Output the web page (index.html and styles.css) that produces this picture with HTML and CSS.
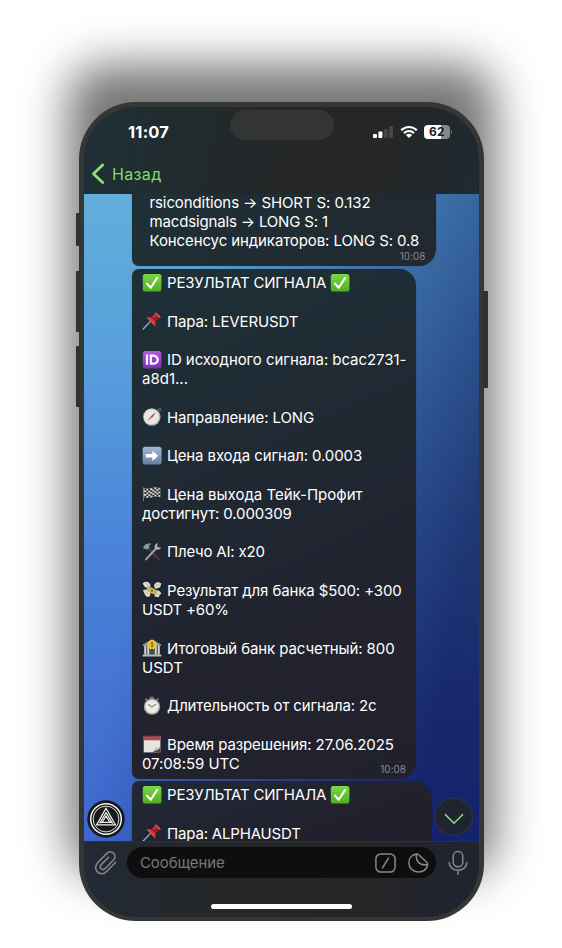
FILE: index.html
```html
<!DOCTYPE html>
<html lang="ru">
<head>
<meta charset="utf-8">
<title>Чат</title>
<link rel="stylesheet" href="styles.css">
</head>
<body>
<svg class="defs" width="0" height="0">
  <defs>
    <linearGradient id="gGreen" x1="0" y1="0" x2="0" y2="1"><stop offset="0" stop-color="#7bd84a"/><stop offset="1" stop-color="#4fae20"/></linearGradient>
    <linearGradient id="gPurple" x1="0" y1="0" x2="0" y2="1"><stop offset="0" stop-color="#b45be0"/><stop offset="1" stop-color="#7d2fb8"/></linearGradient>
    <linearGradient id="gBlue" x1="0" y1="0" x2="0" y2="1"><stop offset="0" stop-color="#a3b7d3"/><stop offset="1" stop-color="#647fa6"/></linearGradient>
    <symbol id="check" viewBox="0 0 20 20"><rect x=".8" y="1" width="18.6" height="17.6" rx="2.6" fill="url(#gGreen)"/><path d="M5 10.6 8.7 14.8 15.2 4.8" fill="none" stroke="#fff" stroke-width="2.1" stroke-linecap="round" stroke-linejoin="round"/></symbol>
    <symbol id="pin" viewBox="0 0 20 20"><path d="M1.2 18 8.2 10.6" stroke="#9fb4c4" stroke-width="1.3" stroke-linecap="round"/><path d="M4.4 6.6C6 5.6 8 5.9 9.3 6.4L12.6 3.6C12.4 2.5 12.7 1.5 13.5.9L19.2 6.2C18.4 7.1 17.4 7.3 16.4 7.1L13.4 10.5C14 12 14 13.8 13 15.4Z" fill="#cf3137"/><path d="M9.3 6.4 12.6 3.6 16.4 7.1 13.4 10.5Z" fill="#9e2029"/><path d="M11 5.9 13.3 4.1M14.3 2.2 17.9 5.6M6 7.2 12.2 13" stroke="#f07070" stroke-width=".9"/></symbol>
    <symbol id="idmark" viewBox="0 0 20 20"><rect x=".8" y="1" width="18.6" height="17.4" rx="3" fill="url(#gPurple)"/><path d="M5 4.6V14.8M8.8 5.7V13.7H11C17.2 13.7 17.2 5.7 11 5.7Z" fill="none" stroke="#fff" stroke-width="2.2"/></symbol>
    <symbol id="compass" viewBox="0 0 20 20"><circle cx="17.6" cy="2.6" r="1.3" fill="none" stroke="#7f858a" stroke-width=".8"/><circle cx="9.8" cy="10" r="8.7" fill="#b0b3b3"/><circle cx="9.4" cy="9.8" r="7.6" fill="#ebe9e4"/><circle cx="9.4" cy="9.8" r="5.7" fill="none" stroke="#cfd0cd" stroke-width=".7" stroke-dasharray="1 1"/><path d="M14 5 10.2 10.7 8.7 9.2Z" fill="#e02b28"/><path d="M4.8 14.6 8.7 9.2 10.2 10.7Z" fill="#8c8f91"/></symbol>
    <symbol id="arrow" viewBox="0 0 20 20"><rect x=".6" y=".8" width="19" height="17.8" rx="2.8" fill="url(#gBlue)"/><path d="M3.8 8.1H10.4V4.7L16.2 9.8 10.4 14.9V11.5H3.8Z" fill="#fff"/></symbol>
    <symbol id="flag" viewBox="0 0 20 20"><path d="M1.5 3.4V17" stroke="#7d8082" stroke-width="1"/><path d="M2 4Q6 5.5 10 4T18.3 4V13Q14 11.8 10 13.2T2 13Z" fill="#d9d9d7"/><path d="M3.4 4.5V13.4M7.4 4.8V13.7M11.4 3.8V12.8M15.4 3.3V12.6" stroke="#26282b" stroke-width="2" stroke-dasharray="1.9 1.7"/><path d="M5.4 4.8V13.6M9.4 4.4V13.4M13.4 3.5V12.8M17.4 3.8V12.8" stroke="#26282b" stroke-width="2" stroke-dasharray="1.9 1.7" stroke-dashoffset="1.8"/></symbol>
    <symbol id="tools" viewBox="0 0 20 20"><path d="M5.2 5.3 17 17.6" stroke="#4c3634" stroke-width="2.3" stroke-linecap="round"/><path d="M1.2 5.2C3 1.6 6.1 1.2 9.5 1.7L6.9 3.5 7.6 5.4 4.7 8 3.5 6.5 1.9 7Z" fill="#859aa5"/><path d="M4 17.4 14 6.5" stroke="#99a4ab" stroke-width="2" stroke-linecap="round"/><path d="M15.9 1.2C12.8 1.8 12.1 4.1 13 6.1 14.1 8.4 17.8 8.6 19 5.3L16.4 5.5 15 4.2Z" fill="#aab5bb"/></symbol>
    <symbol id="money" viewBox="0 0 20 20"><path d="M.8 3.3C4 .5 8 1.8 8.7 6.3L5.4 8C3.5 7.6 2.2 6.6 2 5.6 1.3 5 .8 4.2.8 3.3ZM12 6C12.3 2.2 16 1 19.3 3.4L18.4 6.4C17.5 7.8 15 8.6 13 8.5ZM1 10.6C3 8.9 6 9.2 8.5 12L8 16.2 4.8 17 2.9 14.5ZM12.4 11.4C15.2 9.6 18.2 10.8 19.4 13.4L17.3 15.2 17 17.3 12.7 16.4Z" fill="#e0ddca"/><path d="M3.2 3.5 7.7 6M13 6.1 17.4 4M2.5 11.4 7 14.2M14 12.5 17.4 15" stroke="#a8a58e" stroke-width=".7"/><path d="M5.4 6.2 15.4 10.4 14.4 15.1 4.3 10.8Z" fill="#b5b68d"/><path d="M8.4 7.1 12.6 8.9 11.3 14.2 7.4 12.5Z" fill="#e1b137"/><circle cx="10" cy="10.7" r="1.3" fill="#81733d"/></symbol>
    <symbol id="bank" viewBox="0 0 20 20"><path d="M.9 6.6 10 1.2 19.1 6.6V8H.9Z" fill="#8a9da1"/><path d="M2 8H18V16.7H2Z" fill="#586a70"/><path d="M3.2 8V16.7M6.2 8V16.7M13.8 8V16.7M16.8 8V16.7" stroke="#d4d7cd" stroke-width="1.6"/><path d="M8.4 11H11.6V17H8.4Z" fill="#344955"/><path d="M.6 16.5H19.4V18.5H.6Z" fill="#b4bcb7"/><circle cx="10" cy="6.7" r="4.6" fill="#f0c532"/><path d="M11.5 5Q8.5 3.9 8.7 5.6C9 7 11.7 6.2 11.5 7.9 11.1 9 9.3 8.6 8.5 8.2M10.1 3.6V9.5" fill="none" stroke="#8b681b" stroke-width=".9"/></symbol>
    <symbol id="watch" viewBox="0 0 20 20"><path d="M8.2.7H11.8V3H8.2Z" fill="#75777a"/><path d="m3.4 4 1.6-1.6M16.4 4l-1.6-1.6" stroke="#8b8d8e" stroke-width="1.4"/><circle cx="10" cy="10.6" r="8.2" fill="#a5a7a8"/><circle cx="10" cy="10.6" r="6.7" fill="#edebe7"/><path d="M6 8.4 9.9 10.7 14.2 8.3" fill="none" stroke="#555" stroke-width=".9"/><circle cx="10" cy="10.7" r=".9" fill="#d58230"/></symbol>
    <symbol id="calendar" viewBox="0 0 20 20"><path d="M1.7 2H18.4V18.4H1.7Z" fill="#e6e5e3"/><path d="M1.7 2H18.4V6.3H1.7Z" fill="#a84c50"/><path d="M2 1.9H18" stroke="#56383c" stroke-width="2" stroke-dasharray=".8 1"/><path d="M9.8 18.4C12 17.8 13.6 16.2 13.8 14.2 16 14.6 17.6 14 18.4 12.4V18.4Z" fill="#4c5052"/><path d="M10.5 17.8C12.2 16.8 13 15.6 13.1 13.2 15 14 17 13.6 18.4 12.1L17.2 15.1Z" fill="#c9c9c7"/></symbol>
  </defs>
</svg>

<main class="phone">
  <i class="key key-a"></i><i class="key key-b"></i><i class="key key-c"></i><i class="key key-d"></i>
  <div class="screen">
    <header class="top">
      <div class="status">
        <span class="time">11:07</span>
        <span class="island"></span>
        <span class="signals">
          <svg width="20" height="14" viewBox="0 0 20 14"><rect x="0" y="9" width="4" height="4" rx="1" fill="#fff"/><rect x="5.4" y="6.5" width="4" height="6.5" rx="1" fill="#fff"/><rect x="10.7" y="4" width="4" height="9" rx="1" fill="#454748"/><rect x="16" y="1" width="4" height="12" rx="1" fill="#454748"/></svg>
          <svg class="wifi" width="18" height="14" viewBox="0 0 18 14"><path d="M1.2 5.2C5.6.9 12.4.9 16.8 5.2M4 8.1C6.9 5.4 11.1 5.4 14 8.1" fill="none" stroke="#fff" stroke-width="2.2"/><path d="M5.9 9.9C7.7 8.3 10.3 8.3 12.1 9.9L9 13.1Z" fill="#fff"/></svg>
          <span class="battery">62</span><span class="nub"></span>
        </span>
      </div>
      <div class="nav">
        <svg width="14" height="22" viewBox="0 0 14 22"><path d="M11.7 2 2.4 10.8 11.7 19.6" fill="none" stroke="#8ce572" stroke-width="2.7" stroke-linecap="round" stroke-linejoin="round"/></svg>
        <span class="back">Назад</span>
      </div>
    </header>

    <section class="chat">
      <article class="bubble first">
        <p><span class="t1">rsiconditions → SHORT S: 0.132</span></p>
        <p><span class="t2">macdsignals → LONG S: 1</span></p>
        <p><span class="t3">Консенсус индикаторов: LONG S: 0.8</span></p>
        <time>10:08</time>
      </article>
      <article class="bubble second">
        <p><svg><use href="#check"/></svg><span class="t4">РЕЗУЛЬТАТ СИГНАЛА</span><svg class="end"><use href="#check"/></svg></p>
        <p></p>
        <p><svg><use href="#pin"/></svg><span class="t5">Пара: LEVERUSDT</span></p>
        <p></p>
        <p><svg><use href="#idmark"/></svg><span class="t6">ID исходного сигнала: bcac2731-</span></p>
        <p><span class="t7">a8d1...</span></p>
        <p></p>
        <p><svg><use href="#compass"/></svg><span class="t8">Направление: LONG</span></p>
        <p></p>
        <p><svg><use href="#arrow"/></svg><span class="t9">Цена входа сигнал: 0.0003</span></p>
        <p></p>
        <p><svg><use href="#flag"/></svg><span class="t10">Цена выхода Тейк-Профит</span></p>
        <p><span class="t11">достигнут: 0.000309</span></p>
        <p></p>
        <p><svg><use href="#tools"/></svg><span class="t12">Плечо AI: x20</span></p>
        <p></p>
        <p><svg><use href="#money"/></svg><span class="t13">Результат для банка $500: +300</span></p>
        <p><span class="t14">USDT +60%</span></p>
        <p></p>
        <p><svg><use href="#bank"/></svg><span class="t15">Итоговый банк расчетный: 800</span></p>
        <p><span class="t16">USDT</span></p>
        <p></p>
        <p><svg><use href="#watch"/></svg><span class="t17">Длительность от сигнала: 2с</span></p>
        <p></p>
        <p><svg><use href="#calendar"/></svg><span class="t18">Время разрешения: 27.06.2025</span></p>
        <p><span class="t19">07:08:59 UTC</span></p>
        <time>10:08</time>
      </article>
      <article class="bubble third">
        <p><svg><use href="#check"/></svg><span class="t4">РЕЗУЛЬТАТ СИГНАЛА</span><svg class="end"><use href="#check"/></svg></p>
        <p></p>
        <p><svg><use href="#pin"/></svg><span class="t20">Пара: ALPHAUSDT</span></p>
      </article>
      <svg class="avatar" width="38" height="38" viewBox="0 0 38 38"><circle cx="19" cy="19" r="18.7" fill="#161819"/><g fill="none" stroke="#f3f3f3"><circle cx="19" cy="19" r="15.3" stroke-width="1.5"/><circle cx="19" cy="19" r="12.9" stroke-width=".9"/><path d="M19 8.3 28.3 24.8H9.7Z" stroke-width="1.3"/><path d="M19 12.6 25.6 23.6M19 12.6 12.6 23.4M19 16 22.8 22.2H15.2ZM13 22.4H25" stroke-width="1.1"/></g></svg>
      <span class="down"><svg width="20" height="12" viewBox="0 0 20 12"><path d="M1 1.3 10 10.2 19 1.3" fill="none" stroke="#8ce572" stroke-width="1.5"/></svg></span>
    </section>

    <footer class="composer">
      <div class="row">
        <svg class="clip" width="24" height="26" viewBox="0 0 24 26"><path d="M21.5 12.4 13.2 21.1C10.3 24.4 6 24.5 3.4 21.9.9 19.4 1.1 15.3 3.8 12.5L12.6 3.6C14.7 1.4 17.8 1.3 19.7 3.2 21.6 5.1 21.4 8 19.3 10.2L11.2 18.4C9.9 19.8 8.1 19.8 7 18.7 5.9 17.5 6 15.9 7.2 14.6L14.5 7.2" fill="none" stroke="#85888b" stroke-width="1.5" stroke-linecap="round"/></svg>
        <div class="field">
          <span class="placeholder">Сообщение</span>
          <svg width="21" height="20" viewBox="0 0 21 20"><rect x=".9" y=".9" width="19.2" height="18.2" rx="5" fill="none" stroke="#898989" stroke-width="1.5"/><path d="M13.5 5.2 7.5 14.8" stroke="#898989" stroke-width="1.5" stroke-linecap="round"/></svg>
          <svg width="21" height="20" viewBox="0 0 21 20"><path d="M8.2 1C3.8 1.7.9 5.3.9 9.7c0 5.2 4 9.3 9.3 9.3 4.7 0 8.3-2.6 9.4-7Q20 10.5 18.5 9L10.6 1.8Q9.5.7 8.2 1ZM8.4 1.2C7.4 7.5 11 12.8 19.3 11.7" fill="none" stroke="#898989" stroke-width="1.5" stroke-linejoin="round"/></svg>
        </div>
        <svg class="mic" width="20" height="26" viewBox="0 0 20 26"><rect x="5.2" y="1.6" width="9.6" height="15.2" rx="4.6" fill="none" stroke="#85878c" stroke-width="1.5"/><path d="M1.1 12.4C1.4 17.2 5.1 20.3 10 20.3S18.6 17.2 18.9 12.4M10 20.3V24.2" fill="none" stroke="#85878c" stroke-width="1.5" stroke-linecap="round"/></svg>
      </div>
      <div class="home"></div>
    </footer>
  </div>
</main>
</body>
</html>
```
FILE: styles.css
```css
* { box-sizing: border-box; }
body { margin: 0; height: 948px; overflow: hidden; background: #fff; font-family: Inter, "Liberation Sans", sans-serif; display: flex; align-items: flex-start; }
.defs { position: absolute; }
p { margin: 0; }
.phone { position: relative; width: 405px; height: 819px; margin: 102px 0 0 79px; padding: 5px 5px 4px; border-radius: 57px; background: #353736; }
.phone::before { content: ""; position: absolute; z-index: -1; top: -37px; left: -11px; right: -11px; bottom: 46px; border-radius: 34px; background: rgba(0,0,0,.54); filter: blur(23px); }
.screen { position: relative; width: 395px; height: 810px; overflow: hidden; border-radius: 52px; display: flex; flex-direction: column; }
.key { position: absolute; width: 4px; left: -3px; background: #303231; border-radius: 1px 0 0 1px; }
.key-a { top: 111px; height: 33px; }
.key-b { top: 169px; height: 61px; }
.key-c { top: 244px; height: 61px; }
.key-d { left: auto; right: -4px; top: 189px; height: 97px; width: 5px; }

.top { height: 87px; flex: none; background: linear-gradient(100deg, #1e3138 0, #212b2e 24%, #242627 50%, #242627 78%, #1e2a32 100%); }
.status { display: flex; height: 50px; padding: 3px 0 0 44px; align-items: flex-start; }
.time { width: 101.5px; padding-top: 11px; font-size: 16.5px; line-height: 22px; font-weight: 650; color: #fff; letter-spacing: .2px; }
.island { width: 104px; height: 30px; border-radius: 15px; background: #333534; }
.signals { display: flex; align-items: center; margin: 15px 0 0 39px; height: 14px; }
.wifi { margin-left: 7px; }
.battery { margin-left: 6.5px; width: 26px; height: 14px; border-radius: 4px; background: linear-gradient(90deg, #fff 64%, #85898a 64%); font-size: 12px; line-height: 14px; font-weight: 700; text-align: center; color: #1c1e1f; letter-spacing: .3px; }
.nub { width: 1.5px; height: 4px; margin-left: .5px; border-radius: 0 2px 2px 0; background: #6c6f70; }
.nav { display: flex; align-items: center; padding: 5.5px 0 0 7px; }
.back { font-size: 16px; line-height: 22px; margin-left: 7px; color: #84dc6d; letter-spacing: .35px; }

.chat { position: relative; height: 647px; flex: none; overflow: hidden; padding-left: 48px; display: flex; flex-direction: column; align-items: flex-start; gap: 2.5px; background: linear-gradient(188deg, #2f5a93 0, #294c86 18%, #203a76 45%, #17276a 75%, #12206f 100%); }
.chat::before { content: ""; position: absolute; inset: 0; background: linear-gradient(180deg, #62aedb 0, #589fdc 25%, #4a83d8 55%, #3f67ce 100%); -webkit-mask-image: linear-gradient(100deg, #000 22%, rgba(0,0,0,.2) 75%, transparent 88%); mask-image: linear-gradient(100deg, #000 22%, rgba(0,0,0,.2) 75%, transparent 88%); }
.bubble { position: relative; flex: none; color: #fff; font-size: 15px; border-radius: 7px 17px 17px 7px; box-shadow: 0 0 1px rgba(0,0,0,.6); }
.bubble p { display: flex; align-items: center; height: 19.24px; white-space: nowrap; line-height: 19px; }
.bubble p svg { width: 20px; height: 20px; margin-right: 5px; flex: none; }
.bubble p svg.end { margin: 0 0 0 4px; }
.bubble time { position: absolute; right: 10px; bottom: 3px; font-size: 9.8px; line-height: 12px; color: #858b90; letter-spacing: .1px; }
.first { width: 304px; height: 72px; padding: 0 0 0 18px; border-top-left-radius: 0; border-top-right-radius: 0; background: linear-gradient(110deg, #1e3036, #22282f); margin-left: -.5px; }
.first p:first-child { margin-top: -1.5px; }
.second { width: 284px; height: 510.5px; padding: 4.5px 0 0 10px; background: linear-gradient(155deg, #1e3037 0, #202b34 30%, #21232f 65%, #21212c 100%); }
.third { width: 298.5px; height: 90px; margin-top: -.5px; padding: 4px 0 0 10px; background: linear-gradient(160deg, #212936, #21212d 60%); }
.t1 { letter-spacing: -.1px; }
.t2 { letter-spacing: -.16px; }
.t3 { letter-spacing: -.1px; }
.t4 { letter-spacing: -.2px; }
.t5 { letter-spacing: -.13px; }
.t6 { letter-spacing: -.07px; }
.t8 { letter-spacing: -.12px; }
.t9 { letter-spacing: -.11px; }
.t11 { letter-spacing: -.14px; }
.t12 { letter-spacing: -.2px; }
.t13 { letter-spacing: -.12px; }
.t14 { letter-spacing: -.2px; }
.t15 { letter-spacing: -.1px; }
.t17 { letter-spacing: -.15px; }
.t18 { letter-spacing: -.11px; }
.t19 { letter-spacing: -.08px; }
.t20 { letter-spacing: -.17px; }
.avatar { position: absolute; left: 3px; top: 606px; }
.down { position: absolute; left: 350px; top: 604px; width: 39px; height: 38px; border-radius: 50%; background: #202431; border: 1px solid #303545; display: flex; align-items: center; justify-content: center; }
.down svg { margin-top: 3px; }

.composer { height: 76px; flex: none; border-top: 1px solid #2d3037; background: linear-gradient(90deg, #222a36 0, #252729 32%, #262627 70%, #21232e 92%); }
.row { display: flex; align-items: center; height: 41px; }
.clip { margin-left: 10px; }
.field { display: flex; align-items: center; width: 309px; height: 31px; margin-left: 9px; padding: 0 7px 0 13px; border-radius: 16px; background: #0e0e0f; gap: 12px; }
.placeholder { flex: 1; font-size: 15px; line-height: 20px; color: #77787a; letter-spacing: -.1px; }
.mic { margin-left: 11.5px; }
.home { width: 141px; height: 5px; margin: 21px 0 0 127px; border-radius: 3px; background: #fff; }
```
